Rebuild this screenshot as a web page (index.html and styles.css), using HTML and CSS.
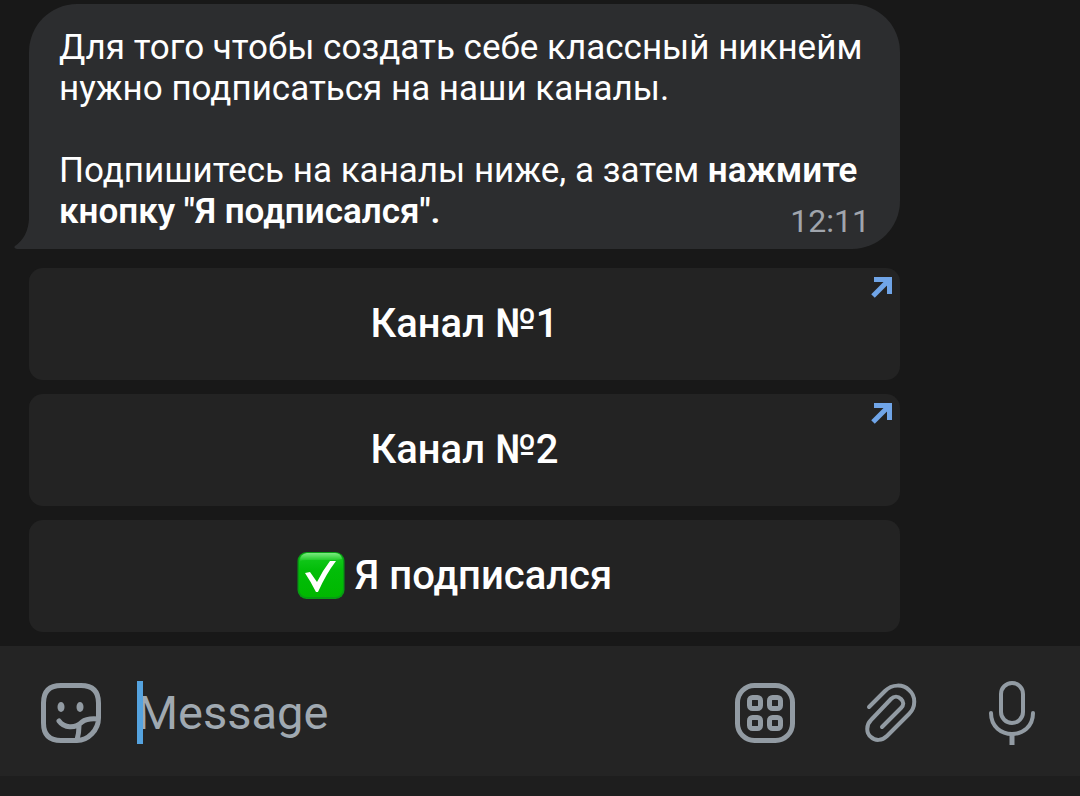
FILE: index.html
```html
<!DOCTYPE html>
<html lang="ru">
<head>
<meta charset="utf-8">
<meta name="viewport" content="width=device-width, initial-scale=1">
<title>Чат</title>
<link rel="stylesheet" href="styles.css">
</head>
<body>
<main class="chat">
  <article class="bubble">
    <svg class="bubble-tail" viewBox="0 0 46 70" aria-hidden="true"><path d="M15 0V40Q14 58 1 67Q-1 69 3 70H46V0Z"/></svg>
    <p class="bubble-text">Для того чтобы создать себе классный никнейм<br>нужно подписаться на наши каналы.</p>
    <p class="bubble-text">Подпишитесь на каналы ниже, а затем <strong>нажмите<br>кнопку "Я подписался".</strong></p>
    <time class="bubble-time" datetime="12:11">12:11</time>
  </article>
  <nav class="keyboard">
    <a class="key" href="#channel-1">Канал №1
      <svg class="key-arrow" viewBox="0 0 22 22" aria-hidden="true"><path d="M3 20L19 4M4 3.5H19.5V18"/></svg>
    </a>
    <a class="key" href="#channel-2">Канал №2
      <svg class="key-arrow" viewBox="0 0 22 22" aria-hidden="true"><path d="M3 20L19 4M4 3.5H19.5V18"/></svg>
    </a>
    <button class="key key-confirm" type="button">
      <svg class="key-check" viewBox="0 0 48 48" aria-hidden="true">
        <defs>
          <linearGradient id="green" x1="0" y1="0" x2="0" y2="1"><stop offset="0" stop-color="#18cb22"/><stop offset=".4" stop-color="#02bd08"/><stop offset="1" stop-color="#00b800"/></linearGradient>
          <linearGradient id="shine" x1="0" y1="0" x2="0" y2="1"><stop offset="0" stop-color="#7bea80"/><stop offset="1" stop-color="#18c820"/></linearGradient>
        </defs>
        <rect x="0.5" y="0" width="47" height="47" rx="9" fill="#079b13"/>
        <rect x="2" y="1" width="44" height="44" rx="8" fill="url(#green)"/>
        <path d="M10 1H38Q44 1 45 7Q42 8 38 8H10Q5 8 3 9Q3 2 10 1Z" fill="url(#shine)"/>
        <path d="M8 21L13 20L20 30Q26 18 33 9H39Q29 22 21 40H19Q14 30 8 21Z" fill="#fff"/>
      </svg>
      <span>Я подписался</span>
    </button>
  </nav>
</main>
<form class="composer">
  <button class="tool" type="button" aria-label="Stickers">
    <svg class="icon" viewBox="0 0 64 64" aria-hidden="true"><path d="M38 59.5H22Q4.500 59.500 4.500 42V22Q4.500 4.500 22 4.500H42Q59.500 4.500 59.500 22V37C59.500 49 49 59.500 38 59.500ZM20 40C25 47 36 48 43 41Q48 37 59 38M40 45Q40 52 38 59"/><ellipse class="solid" cx="22" cy="26" rx="3.500" ry="5"/><ellipse class="solid" cx="41" cy="26" rx="3.500" ry="5"/></svg>
  </button>
  <div class="field">
    <input class="field-input" type="text" placeholder="Message" aria-label="Message">
    <span class="field-caret"></span>
  </div>
  <div class="tools">
    <button class="tool" type="button" aria-label="Bot commands">
      <svg class="icon" viewBox="0 0 64 64" aria-hidden="true"><rect x="5.5" y="4.5" width="55" height="55" rx="17"/><rect x="17.5" y="16.5" width="11" height="11" rx="3"/><rect x="37.5" y="16.5" width="11" height="11" rx="3"/><rect x="17.5" y="36.5" width="11" height="11" rx="3"/><rect x="37.5" y="36.5" width="11" height="11" rx="3"/></svg>
    </button>
    <button class="tool" type="button" aria-label="Attach file">
      <svg class="icon icon-light" viewBox="0 0 64 64" aria-hidden="true"><path d="M13 26L29 10C36 3 47 3 53 9C60 15 60 26 53 33L31 55C26 60 19 60 15 56C10 52 10 44 15 39L35 18C38 15 42 15 45 18C48 21 48 24 45 27L26 46"/></svg>
    </button>
    <button class="tool" type="button" aria-label="Record voice message">
      <svg class="icon icon-light" viewBox="0 0 64 64" aria-hidden="true"><rect x="21" y="2" width="22" height="40" rx="11"/><path d="M11 32C11 60 53 60 53 32"/><path class="stem" d="M32 53V64"/></svg>
    </button>
  </div>
</form>
<footer class="system-bar"></footer>
</body>
</html>
```
FILE: styles.css
```css
* { box-sizing: border-box; }

body {
  display: flex;
  flex-direction: column;
  min-height: 100vh;
  margin: 0;
  background: #181818;
  color: #fff;
  font-family: Roboto, "Noto Sans", sans-serif;
}

.chat {
  flex: 1;
  display: flex;
  flex-direction: column;
  gap: 19px;
  padding: 4px 180px 14px 29px;
}

.bubble {
  position: relative;
  display: flex;
  flex-direction: column;
  gap: 41px;
  padding: 23px 30px 17px;
  border-radius: 48px 48px 48px 0;
  background: #2c2d2f;
}

.bubble-tail {
  position: absolute;
  left: -15px;
  bottom: 0;
  width: 46px;
  height: 70px;
  fill: #2c2d2f;
}

.bubble-text {
  position: relative;
  margin: 0;
  font-size: 35px;
  line-height: 41px;
}

.bubble-text strong { font-weight: 600; }

.bubble-time {
  position: absolute;
  right: 30px;
  bottom: 8px;
  color: #a0a5ad;
  font-size: 32px;
  line-height: 40px;
}

.keyboard {
  display: flex;
  flex-direction: column;
  gap: 14px;
}

.key {
  position: relative;
  display: flex;
  align-items: center;
  justify-content: center;
  gap: 10px;
  min-height: 112px;
  padding: 0 20px;
  border: 0;
  border-radius: 14px;
  background: #232323;
  color: #fff;
  font: 500 40px/48px Roboto, "Noto Sans", sans-serif;
  text-decoration: none;
}

.key-confirm { padding-right: 40px; }

.key-arrow {
  position: absolute;
  top: 8px;
  right: 8px;
  width: 22px;
  height: 22px;
  fill: none;
  stroke: #70a5e8;
  stroke-width: 5;
}

.key-check {
  width: 48px;
  height: 48px;
}

.composer {
  display: flex;
  align-items: center;
  gap: 34px;
  min-height: 130px;
  padding: 4px 36px 0 39px;
  background: #242424;
}

.tool {
  flex: none;
  display: flex;
  padding: 0;
  border: 0;
  background: none;
}

.tools {
  display: flex;
  gap: 60px;
}

.icon {
  width: 64px;
  height: 64px;
  fill: none;
  stroke: #929ba3;
  stroke-width: 5;
  stroke-linecap: round;
  stroke-linejoin: round;
}

.icon-light { stroke-width: 4; }

.icon .solid {
  fill: #929ba3;
  stroke: none;
}

.icon .stem {
  stroke-width: 5;
  stroke-linecap: butt;
}

.field {
  position: relative;
  flex: 1;
  min-width: 0;
}

.field-input {
  display: block;
  width: 100%;
  height: 64px;
  padding: 0;
  border: 0;
  outline: 0;
  background: none;
  color: #fff;
  font: 400 47px/64px Roboto, "Noto Sans", sans-serif;
}

.field-input::placeholder {
  color: #a0a9b1;
  opacity: 1;
}

.field-caret {
  position: absolute;
  top: 0;
  left: 0;
  width: 6px;
  height: 63px;
  background: #55a3df;
}

.system-bar {
  height: 20px;
  background: #1e1e1e;
}
```
